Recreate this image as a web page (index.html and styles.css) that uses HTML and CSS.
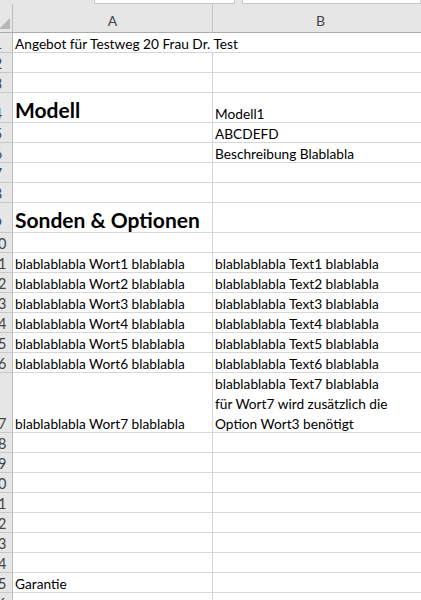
FILE: index.html
```html
<!DOCTYPE html>
<html lang="de">
<head>
    <meta charset="UTF-8">
    <meta name="viewport" content="width=device-width, initial-scale=1.0">
    <title>Angebot</title>
    <link rel="stylesheet" href="styles.css">
</head>
<body>
    <div class="sheet">
        <div class="tabs">
            <div class="tab-gap"></div>
            <div class="tab-box name"></div>
            <div class="tab-box formula"></div>
        </div>

        <div class="row head">
            <div class="corner">
                <svg width="12" height="28" viewBox="0 0 12 28"><polygon points="10,14 10,25 -1,25" fill="#b7b7b7"/></svg>
            </div>
            <div class="ch">A</div>
            <div class="ch">B</div>
        </div>

        <div class="row"><div class="rh"><span>1</span></div><div class="c wide">Angebot für Testweg 20 Frau Dr. Test</div></div>
        <div class="row"><div class="rh"><span>2</span></div><div class="c"></div><div class="c"></div></div>
        <div class="row"><div class="rh"><span>3</span></div><div class="c"></div><div class="c"></div></div>
        <div class="row tall"><div class="rh"><span>4</span></div><div class="c title">Modell</div><div class="c">Modell1</div></div>
        <div class="row"><div class="rh"><span>5</span></div><div class="c"></div><div class="c">ABCDEFD</div></div>
        <div class="row"><div class="rh"><span>6</span></div><div class="c"></div><div class="c">Beschreibung Blablabla</div></div>
        <div class="row"><div class="rh"><span>7</span></div><div class="c"></div><div class="c"></div></div>
        <div class="row"><div class="rh"><span>8</span></div><div class="c"></div><div class="c"></div></div>
        <div class="row tall"><div class="rh"><span>9</span></div><div class="c title">Sonden &amp; Optionen</div><div class="c"></div></div>
        <div class="row"><div class="rh"><span>10</span></div><div class="c"></div><div class="c"></div></div>
        <div class="row"><div class="rh"><span>11</span></div><div class="c">blablablabla Wort1 blablabla</div><div class="c">blablablabla Text1 blablabla</div></div>
        <div class="row"><div class="rh"><span>12</span></div><div class="c">blablablabla Wort2 blablabla</div><div class="c">blablablabla Text2 blablabla</div></div>
        <div class="row"><div class="rh"><span>13</span></div><div class="c">blablablabla Wort3 blablabla</div><div class="c">blablablabla Text3 blablabla</div></div>
        <div class="row"><div class="rh"><span>14</span></div><div class="c">blablablabla Wort4 blablabla</div><div class="c">blablablabla Text4 blablabla</div></div>
        <div class="row"><div class="rh"><span>15</span></div><div class="c">blablablabla Wort5 blablabla</div><div class="c">blablablabla Text5 blablabla</div></div>
        <div class="row"><div class="rh"><span>16</span></div><div class="c">blablablabla Wort6 blablabla</div><div class="c">blablablabla Text6 blablabla</div></div>
        <div class="row wrap"><div class="rh"><span>17</span></div><div class="c">blablablabla Wort7 blablabla</div><div class="c wrapped"><div>blablablabla Text7 blablabla<br>für Wort7 wird zusätzlich die<br>Option Wort3 benötigt</div></div></div>
        <div class="row"><div class="rh"><span>18</span></div><div class="c"></div><div class="c"></div></div>
        <div class="row"><div class="rh"><span>19</span></div><div class="c"></div><div class="c"></div></div>
        <div class="row"><div class="rh"><span>20</span></div><div class="c"></div><div class="c"></div></div>
        <div class="row"><div class="rh"><span>21</span></div><div class="c"></div><div class="c"></div></div>
        <div class="row"><div class="rh"><span>22</span></div><div class="c"></div><div class="c"></div></div>
        <div class="row"><div class="rh"><span>23</span></div><div class="c"></div><div class="c"></div></div>
        <div class="row"><div class="rh"><span>24</span></div><div class="c"></div><div class="c"></div></div>
        <div class="row"><div class="rh"><span>25</span></div><div class="c">Garantie</div><div class="c"></div></div>
        <div class="row"><div class="rh"><span>26</span></div><div class="c"></div><div class="c"></div></div>
    </div>
</body>
</html>
```

FILE: styles.css
```css
body {
    margin: 0;
    font-family: Lato, "Liberation Sans", sans-serif;
    background: #fff;
    color: #000;
}

.sheet {
    width: 421px;
    height: 600px;
    overflow: hidden;
}

.tabs {
    display: flex;
    height: 4px;
    background: #e6e6e6;
}

.tab-gap {
    width: 94px;
}

.tab-box {
    box-sizing: border-box;
    background: #fff;
    border: 1px solid #c8c8c8;
    border-top: 0;
}

.tab-box.name {
    width: 141px;
    margin-right: 7px;
}

.tab-box.formula {
    flex: 1;
}

.row {
    display: grid;
    grid-template-columns: 13px 200px 216px;
    height: 20px;
}

.row.tall {
    height: 30px;
}

.row.wrap {
    height: 60px;
}

.row.head {
    height: 29px;
    background: #e6e6e6;
}

.corner {
    box-sizing: border-box;
    border-right: 1px solid #bdbdbd;
    border-bottom: 1px solid #ababab;
    overflow: hidden;
}

.ch {
    box-sizing: border-box;
    display: flex;
    align-items: flex-end;
    justify-content: center;
    padding-bottom: 3px;
    border-right: 1px solid #c6c6c6;
    border-bottom: 1px solid #ababab;
    color: #444;
    font-size: 14px;
}

.rh,
.c {
    box-sizing: border-box;
    display: flex;
    align-items: flex-end;
    border-right: 1px solid #d6d6d6;
    border-bottom: 1px solid #d6d6d6;
    overflow: hidden;
    white-space: nowrap;
    font-size: 13.7px;
    line-height: 16px;
}

.rh {
    background: #e6e6e6;
    border-right-color: #bdbdbd;
    border-bottom-color: #c8c8c8;
    color: #444;
    font-size: 14.5px;
}

.rh span {
    flex: none;
    width: 28px;
    margin-left: -16px;
    text-align: center;
}

.c {
    padding: 0 2px;
}

.c.wide {
    grid-column: span 2;
}

.c.title {
    font-size: 21px;
    font-weight: bold;
    line-height: 25px;
}

.c.wrapped {
    line-height: 20px;
}

.c.wrapped div {
    margin-bottom: -2px;
}
```
